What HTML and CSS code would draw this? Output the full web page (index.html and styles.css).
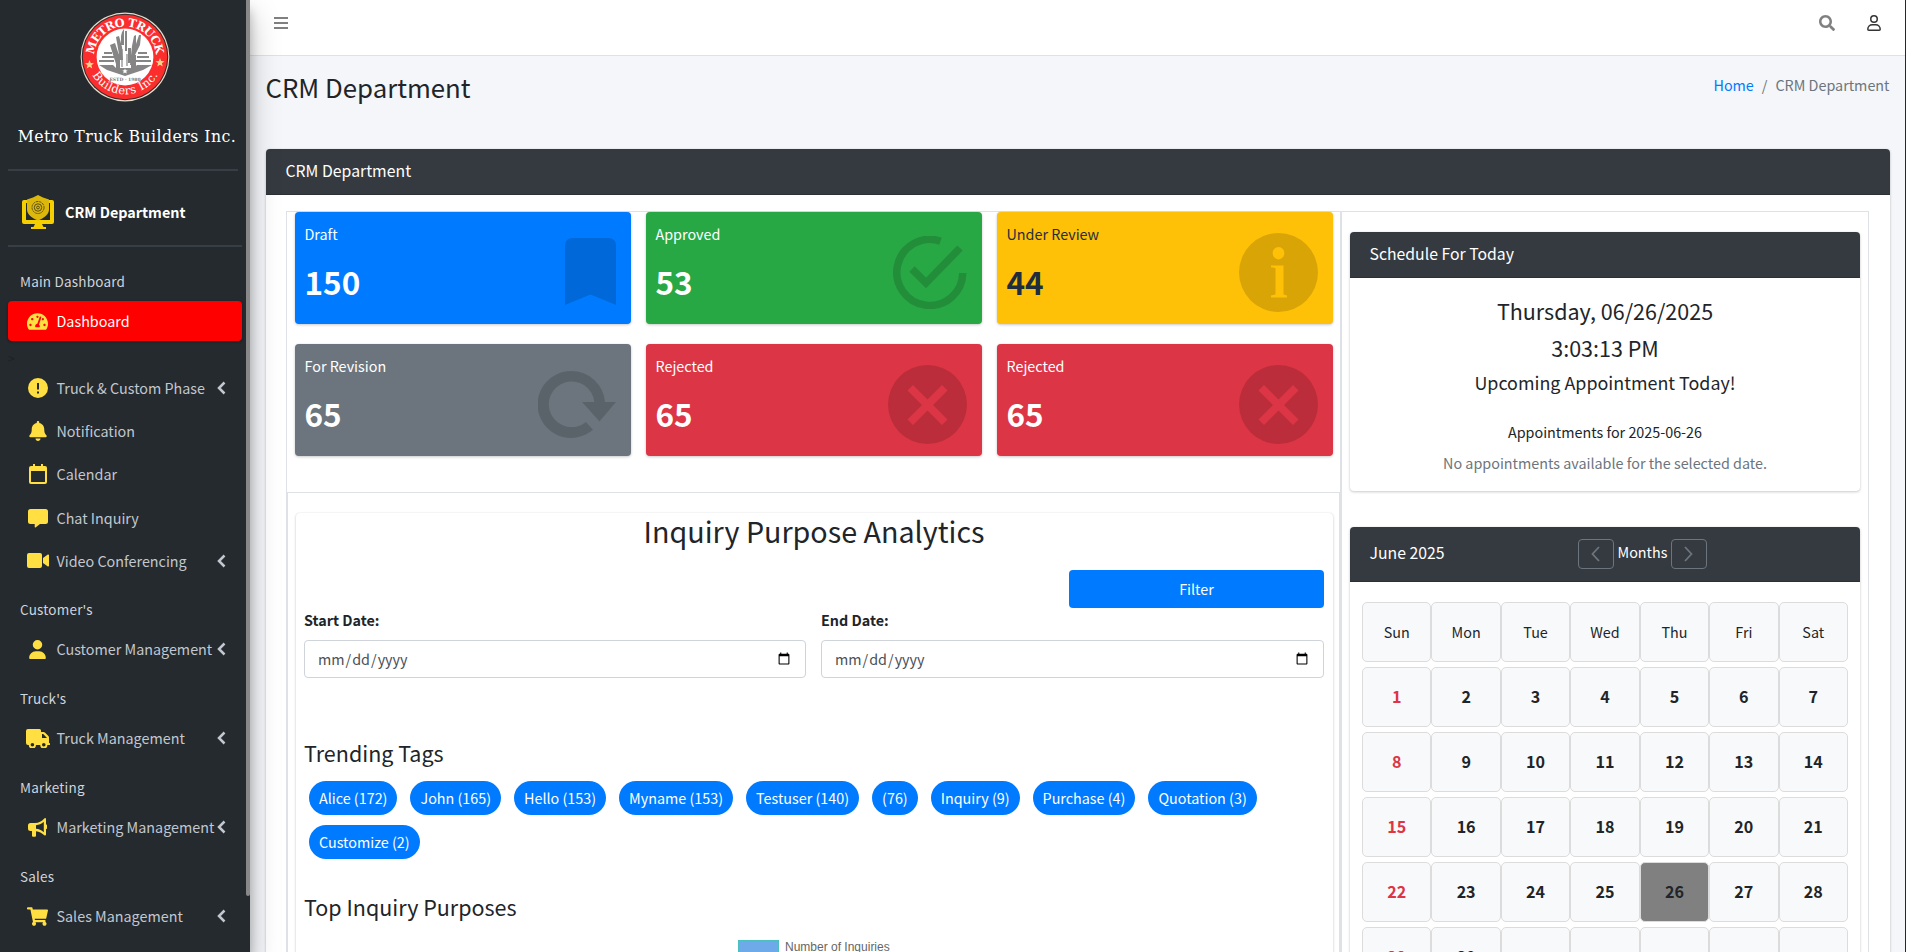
FILE: index.html
```html
<!DOCTYPE html>
<html lang="en">
<head>
<meta charset="utf-8">
<title>CRM Department</title>
<link rel="stylesheet" href="styles.css">
</head>
<body>
<div class="wrapper">
  <aside class="sidebar">
    <div class="brand">
      <svg class="brand-logo" viewBox="0 0 90 90" width="90" height="90">
        <defs>
          <path id="arc-top" d="M14.2 49a31 31 0 1 1 61.600 0"/>
          <path id="arc-bottom" d="M7.600 45a37.400 37.400 0 0 0 74.800 0"/>
        </defs>
        <circle cx="45" cy="45" r="44.400" fill="#e9dccb"/>
        <circle cx="45" cy="45" r="43.300" fill="#3a2a2a"/>
        <circle cx="45" cy="45" r="42.200" fill="#fb2d2d"/>
        <circle cx="45" cy="45" r="28.400" fill="#fff"/>
        <text class="logo-top"><textPath href="#arc-top" startOffset="50%" text-anchor="middle" textLength="92">METRO TRUCK</textPath></text>
        <text class="logo-bottom"><textPath href="#arc-bottom" startOffset="50%" text-anchor="middle" textLength="80">Builders Inc.</textPath></text>
        <path fill="#ffd08a" d="M9.500 48l1.200 3.100 3.300.2-2.600 2 .9 3.200-2.800-1.800-2.800 1.800.9-3.200-2.600-2 3.300-.2zM80 46l1.200 3.100 3.300.2-2.600 2 .9 3.200-2.800-1.800-2.800 1.800.9-3.200-2.600-2 3.300-.2z"/>
        <g fill="#858585">
          <path d="M42 20l2-3v16h-3V24zM45 19h2v20h-2zM30 33l5-2 4 12v9h-3zM36 25l3-1 3 11 1 13h-3zM52 34l2-10 2-1v9l3-9h2l-1 10-5 10-1 10h-4zM48 36h3v15h-3zM24 40h8v2h-8zM22 44h12v2H22zM19 48h15v2H19zM58 40h9v2h-9zM57 44h12v2H57zM56 48h15v2H56zM36 42h4v14h-4zM51 43h5v13h-5z"/>
          <path d="M19 53h14l3 3h18l3-3h15l-9 5-18 6-18-6z"/>
          <path d="M41 37h2v18h-2zM46 42h2v12h-2z" opacity=".6"/>
        </g>
        <path fill="#fff" d="M45 56.500l.8 1.700 1.900.2-1.400 1.200.4 1.900-1.700-1-1.700 1 .4-1.900-1.400-1.200 1.900-.2z"/>
        <text class="logo-small" x="45" y="68.500" text-anchor="middle">ESTD · 1980</text>
      </svg>
      <span class="brand-text">Metro Truck Builders Inc.</span>
    </div>
    <div class="user-panel">
      <svg width="34" height="34" viewBox="0 0 34 34">
        <path fill="#f5cf00" d="M3 5h8v3H5v17h24V8h-5V5h7a2 2 0 0 1 2 2v20a2 2 0 0 1-2 2H21l1.500 3H25v2H10v-2h2.500l1.500-3H3a2 2 0 0 1-2-2V7a2 2 0 0 1 2-2z"/>
        <path fill="#dcb80c" d="M17 0l5 2.500 6 2v10c0 5-5 8.500-11 11-6-2.500-11-6-11-11v-10l6-2z"/>
        <g fill="none" stroke="#5a4d10" stroke-width="1"><circle cx="17" cy="12.500" r="6" stroke-dasharray="2.400 .8"/><circle cx="17" cy="12.500" r="3.700"/><circle cx="17" cy="12.500" r="1.400"/></g>
      </svg>
      <span class="user-name">CRM Department</span>
    </div>
    <nav class="menu">
      <div class="menu-header first">Main Dashboard</div>
      <a class="menu-item active"><span class="ico"><svg width="21" height="19" viewBox="0 0 576 512"><path d="M288 32C128.940 32 0 160.940 0 320c0 52.800 14.250 102.260 39.060 144.800 5.610 9.620 16.300 15.200 27.440 15.200h443c11.140 0 21.830-5.580 27.440-15.200C561.750 422.260 576 372.800 576 320c0-159.060-128.940-288-288-288zm0 64c14.710 0 26.580 10.130 30.320 23.650-1.110 2.260-2.640 4.230-3.450 6.670l-9.220 27.670c-5.130 3.490-10.970 6.010-17.640 6.010-17.670 0-32-14.330-32-32S270.330 96 288 96zM96 384c-17.670 0-32-14.330-32-32s14.330-32 32-32 32 14.330 32 32-14.330 32-32 32zm48-160c-17.670 0-32-14.330-32-32s14.330-32 32-32 32 14.330 32 32-14.330 32-32 32zm246.770-72.410l-61.330 184C343.130 347.330 352 364.540 352 384c0 11.720-3.380 22.550-8.880 32H232.880c-5.500-9.450-8.880-20.280-8.880-32 0-33.940 26.500-61.430 59.900-63.590l61.340-184.010c4.170-12.560 17.730-19.450 30.360-15.170 12.570 4.190 19.350 17.790 15.170 30.360zm14.660 57.200l15.520-46.550c3.470-1.290 7.130-2.230 11.050-2.230 17.670 0 32 14.330 32 32s-14.330 32-32 32c-11.380-.01-20.890-6.280-26.570-15.220zM480 384c-17.670 0-32-14.330-32-32s14.330-32 32-32 32 14.330 32 32-14.330 32-32 32z"/></svg></span><span>Dashboard</span></a>
      <div class="stray">&gt;</div>
      <a class="menu-item tall"><span class="ico"><svg width="20" height="20" viewBox="0 0 20 20"><path fill-rule="evenodd" d="M10 0a10 10 0 1 0 0 20 10 10 0 0 0 0-20zM9 5h2v6.500H9zM9 13.500h2v2H9z"/></svg></span><span>Truck &amp; Custom Phase</span><svg class="chev" width="9" height="14" viewBox="0 0 9 14"><path d="M7.500 1.500L2 7l5.500 5.500"/></svg></a>
      <a class="menu-item tall"><span class="ico"><svg width="18" height="20" viewBox="0 0 448 512"><path d="M224 512c35.320 0 63.970-28.650 63.970-64H160.030c0 35.350 28.650 64 63.970 64zm215.390-149.710c-19.320-20.760-55.470-51.990-55.470-154.290 0-77.700-54.480-139.900-127.940-155.160V32c0-17.670-14.320-32-31.980-32s-31.980 14.330-31.980 32v20.840C118.560 68.100 64.080 130.300 64.080 208c0 102.300-36.150 133.530-55.470 154.290-6 6.450-8.660 14.160-8.610 21.710.11 16.400 12.980 32 32.100 32h383.800c19.120 0 32-15.600 32.100-32 .05-7.550-2.610-15.270-8.610-21.710z"/></svg></span><span>Notification</span></a>
      <a class="menu-item tall"><span class="ico"><svg width="18" height="20" viewBox="0 0 18 20"><path fill-rule="evenodd" d="M4 0h2v2h6V0h2v2h2a2 2 0 0 1 2 2v14a2 2 0 0 1-2 2H2a2 2 0 0 1-2-2V4a2 2 0 0 1 2-2h2zM2 7v11h14V7z"/></svg></span><span>Calendar</span></a>
      <a class="menu-item tall"><span class="ico"><svg width="20" height="20" viewBox="0 0 20 20"><path d="M2.500 1h15A2.500 2.500 0 0 1 20 3.500v10a2.500 2.500 0 0 1-2.500 2.500H12l-4.500 3.500c-.5.300-.8 0-.8-.4V16H2.500A2.500 2.500 0 0 1 0 13.500v-10A2.500 2.500 0 0 1 2.500 1z"/></svg></span><span>Chat Inquiry</span></a>
      <a class="menu-item tall"><span class="ico"><svg width="22" height="15" viewBox="0 0 22 15"><path d="M2 0h11a2 2 0 0 1 2 2v11a2 2 0 0 1-2 2H2a2 2 0 0 1-2-2V2a2 2 0 0 1 2-2zM16 5l4.500-3.200c.7-.5 1.500 0 1.500.8v9.800c0 .8-.8 1.300-1.500.8L16 10z"/></svg></span><span>Video Conferencing</span><svg class="chev" width="9" height="14" viewBox="0 0 9 14"><path d="M7.500 1.500L2 7l5.500 5.500"/></svg></a>
      <div class="menu-header customer">Customer's</div>
      <a class="menu-item"><span class="ico"><svg width="17" height="19" viewBox="0 0 448 512"><path d="M224 256A128 128 0 1 0 224 0a128 128 0 1 0 0 256zm-45.700 48C79.800 304 0 383.800 0 482.300C0 498.700 13.300 512 29.700 512H418.300c16.400 0 29.700-13.300 29.700-29.700C448 383.800 368.200 304 269.700 304H178.300z"/></svg></span><span>Customer Management</span><svg class="chev" width="9" height="14" viewBox="0 0 9 14"><path d="M7.500 1.500L2 7l5.500 5.500"/></svg></a>
      <div class="menu-header">Truck's</div>
      <a class="menu-item"><span class="ico"><svg width="24" height="19" viewBox="0 0 24 19"><path fill-rule="evenodd" d="M2 0h11.500A1.500 1.500 0 0 1 15 1.500V3h2.500c.5 0 1 .2 1.400.6L22.400 7c.4.4.6.9.6 1.400V14h.4a.6.600 0 0 1 .6.600v.8a.6.600 0 0 1-.6.600h-2a3.600 3.600 0 0 1-7.200 0H10a3.600 3.600 0 0 1-7.200 0H2a2 2 0 0 1-2-2V2a2 2 0 0 1 2-2zM16 5v4h5l-3.800-4zM6.400 14a1.800 1.800 0 1 0 0 3.600 1.800 1.800 0 0 0 0-3.600zM17.800 14a1.800 1.800 0 1 0 0 3.600 1.800 1.800 0 0 0 0-3.600z"/></svg></span><span>Truck Management</span><svg class="chev" width="9" height="14" viewBox="0 0 9 14"><path d="M7.500 1.500L2 7l5.500 5.500"/></svg></a>
      <div class="menu-header">Marketing</div>
      <a class="menu-item"><span class="ico"><svg width="19" height="19" viewBox="0 0 19 19"><path fill-rule="evenodd" d="M17.200.1a1 1 0 0 1 .8 1V6.500a2 2 0 0 1 0 4.500v5.500a1 1 0 0 1-1.700.7C13.500 14.800 11.500 13.500 8 13.200v4.600a1 1 0 0 1-1 1H5a1 1 0 0 1-1-1V13H2.500A2.500 2.500 0 0 1 0 10.500v-3A2.500 2.500 0 0 1 2.500 5H7c4 0 6.500-1.800 9.300-4.600a1 1 0 0 1 .9-.3zM15.800 3.800C13.300 6 11 7 8 7.200v3.600c3 .2 5.300 1.200 7.800 3.400z"/></svg></span><span>Marketing Management</span><svg class="chev" width="9" height="14" viewBox="0 0 9 14"><path d="M7.500 1.500L2 7l5.500 5.500"/></svg></a>
      <div class="menu-header">Sales</div>
      <a class="menu-item"><span class="ico"><svg width="21" height="19" viewBox="0 0 576 512"><path d="M528.120 301.319l47.273-208C578.806 78.301 567.391 64 551.990 64H159.208l-9.166-44.810C147.758 8.021 137.930 0 126.529 0H24C10.745 0 0 10.745 0 24v16c0 13.255 10.745 24 24 24h69.883l70.248 343.435C147.325 417.100 136 435.222 136 456c0 30.928 25.072 56 56 56s56-25.072 56-56c0-15.674-6.447-29.835-16.824-40h209.647C430.447 426.165 424 440.326 424 456c0 30.928 25.072 56 56 56s56-25.072 56-56c0-22.172-12.888-41.332-31.579-50.405l5.517-24.276c3.413-15.018-8.002-29.319-23.403-29.319H218.117l-6.545-32h293.145c11.206 0 20.920-7.754 23.403-18.681z"/></svg></span><span>Sales Management</span><svg class="chev" width="9" height="14" viewBox="0 0 9 14"><path d="M7.500 1.500L2 7l5.500 5.500"/></svg></a>
    </nav>
    <div class="scroll-thumb"></div>
  </aside>

  <div class="page">
    <header class="topbar">
      <svg width="14" height="14" viewBox="0 0 14 14" fill="#808080"><path d="M0 1h14v2H0zM0 6h14v2H0zM0 11h14v2H0z"/></svg>
      <div class="topbar-right">
        <svg width="16" height="16" viewBox="0 0 512 512" fill="#808080"><path d="M505 442.700L405.300 343c-4.500-4.500-10.600-7-17-7H372c27.600-35.300 44-79.700 44-128C416 93.100 322.900 0 208 0S0 93.100 0 208s93.100 208 208 208c48.300 0 92.700-16.400 128-44v16.300c0 6.400 2.500 12.500 7 17l99.700 99.700c9.400 9.400 24.600 9.400 33.900 0l28.300-28.300c9.400-9.400 9.400-24.600.1-34zM208 336c-70.700 0-128-57.200-128-128 0-70.700 57.200-128 128-128 70.700 0 128 57.200 128 128 0 70.700-57.200 128-128 128z"/></svg>
        <svg width="14" height="16" viewBox="0 0 14 16" fill="none" stroke="#343434" stroke-width="1.500"><circle cx="7" cy="4" r="3.250"/><path d="M.8 14.200a4.500 4.500 0 0 1 4.500-4.400h3.400a4.500 4.500 0 0 1 4.500 4.400c0 .6-.4 1-1 1H1.800c-.6 0-1-.4-1-1z"/></svg>
      </div>
    </header>

    <div class="content-header">
      <h1>CRM Department</h1>
      <div class="breadcrumb"><a>Home</a><span class="sep">/</span><span>CRM Department</span></div>
    </div>

    <section class="card main-card">
      <div class="card-header">CRM Department</div>
      <div class="columns">
        <div class="left-col">
          <div class="stats">
            <div class="stat blue"><div><p>Draft</p><h3>150</h3></div>
              <svg class="raised" width="51" height="67" viewBox="0 0 51 67"><path d="M7 0h37a7 7 0 0 1 7 7v60L25.500 56.500 0 67V7a7 7 0 0 1 7-7z"/></svg></div>
            <div class="stat green"><div><p>Approved</p><h3>53</h3></div>
              <svg width="74" height="73" viewBox="0 0 74 73"><path class="stroke" stroke-width="7.500" d="M47.500 5.200A33 33 0 1 0 69.800 37M19 33l14 14L67 12"/></svg></div>
            <div class="stat yellow"><div><p>Under Review</p><h3>44</h3></div>
              <svg width="79" height="79" viewBox="0 0 79 79"><path fill-rule="evenodd" d="M39.500 0a39.500 39.500 0 1 0 0 79 39.500 39.500 0 0 0 0-79zm0 14a5.800 6.200 0 1 1 0 12.400 5.800 6.200 0 0 1 0-12.400zM32 32.500H44.500V61.500l3.500 1V64.500H32V62.500l4.500-1V35l-4.500-.8z"/></svg></div>
            <div class="stat gray"><div><p>For Revision</p><h3>65</h3></div>
              <svg width="78" height="67" viewBox="0 0 78 67"><path d="M33.500 0A33.500 33.500 0 0 1 67 31H78L61.500 50.500 44 31H56.300A22.800 22.800 0 1 0 48 51L55 58.800A33.500 33.500 0 1 1 33.500 0z"/></svg></div>
            <div class="stat red"><div><p>Rejected</p><h3>65</h3></div>
              <svg width="79" height="79" viewBox="0 0 79 79"><path fill-rule="evenodd" d="M39.500 0a39.500 39.500 0 1 0 0 79 39.500 39.500 0 0 0 0-79zM25 20l14.500 14.500L54 20l5.500 5.500L45 40l14.500 14.500L54 60 39.500 45.500 25 60l-5.500-5.500L34 40 19.500 25.500z"/></svg></div>
            <div class="stat red"><div><p>Rejected</p><h3>65</h3></div>
              <svg width="79" height="79" viewBox="0 0 79 79"><path fill-rule="evenodd" d="M39.500 0a39.500 39.500 0 1 0 0 79 39.500 39.500 0 0 0 0-79zM25 20l14.500 14.500L54 20l5.500 5.500L45 40l14.500 14.500L54 60 39.500 45.500 25 60l-5.500-5.500L34 40 19.500 25.500z"/></svg></div>
          </div>
          <div class="analytics-box">
            <div class="card analytics">
              <h2>Inquiry Purpose Analytics</h2>
              <button class="filter">Filter</button>
              <div class="dates">
                <label>Start Date:<input type="date"></label>
                <label>End Date:<input type="date"></label>
              </div>
              <h4 class="trending">Trending Tags</h4>
              <div class="tags">
                <span>Alice (172)</span><span>John (165)</span><span>Hello (153)</span><span>Myname (153)</span><span>Testuser (140)</span><span>(76)</span><span>Inquiry (9)</span><span>Purchase (4)</span><span>Quotation (3)</span><span>Customize (2)</span>
              </div>
              <h4 class="top">Top Inquiry Purposes</h4>
              <div class="legend"><i></i>Number of Inquiries</div>
            </div>
          </div>
        </div>
        <div class="right-col">
          <div class="card schedule">
            <div class="card-header">Schedule For Today</div>
            <div class="schedule-body">
              <div class="big">Thursday, 06/26/2025</div>
              <div class="big time">3:03:13 PM</div>
              <div class="upcoming">Upcoming Appointment Today!</div>
              <div class="appts">Appointments for 2025-06-26</div>
              <div class="none">No appointments available for the selected date.</div>
            </div>
          </div>
          <div class="card calendar">
            <div class="card-header cal-header">
              <span class="cal-title">June 2025</span>
              <div class="months">
                <button><svg width="9" height="16" viewBox="0 0 9 16"><path d="M8 1L1.500 8 8 15"/></svg></button>
                <span>Months</span>
                <button><svg width="9" height="16" viewBox="0 0 9 16"><path d="M1 1l6.500 7L1 15"/></svg></button>
              </div>
            </div>
            <div class="cal-grid">
              <b class="dow">Sun</b><b class="dow">Mon</b><b class="dow">Tue</b><b class="dow">Wed</b><b class="dow">Thu</b><b class="dow">Fri</b><b class="dow">Sat</b>
              <b class="sun">1</b><b>2</b><b>3</b><b>4</b><b>5</b><b>6</b><b>7</b>
              <b class="sun">8</b><b>9</b><b>10</b><b>11</b><b>12</b><b>13</b><b>14</b>
              <b class="sun">15</b><b>16</b><b>17</b><b>18</b><b>19</b><b>20</b><b>21</b>
              <b class="sun">22</b><b>23</b><b>24</b><b>25</b><b class="today">26</b><b>27</b><b>28</b>
              <b class="sun">29</b><b>30</b><b></b><b></b><b></b><b></b><b></b>
            </div>
          </div>
        </div>
      </div>
    </section>
  </div>
</div>
</body>
</html>
```

FILE: styles.css
```css
* { box-sizing: border-box; }
html, body { height: 100%; }
body {
  margin: 0;
  overflow: hidden;
  background: #25292d;
  color: #212529;
  font-family: "Noto Sans CJK SC", "Noto Sans", sans-serif;
  font-size: 14.35px;
  line-height: 24px;
}
h1, h2, h3, h4, p { margin: 0; font-weight: 400; }
svg { display: block; flex: none; }
button { font: inherit; cursor: pointer; }

.wrapper { display: flex; width: 1905px; height: 952px; overflow: hidden; }

/* Sidebar */
.sidebar {
  position: relative;
  z-index: 2;
  flex: none;
  width: 250px;
  height: 952px;
  padding-left: 8px;
  background: #252a2e;
  box-shadow: 0 14px 28px rgba(0, 0, 0, .25), 0 10px 10px rgba(0, 0, 0, .22);
}
.scroll-thumb {
  position: absolute;
  top: 0;
  right: 0;
  width: 4px;
  height: 896px;
  background: #888;
  border-radius: 0 0 2px 2px;
}
.brand {
  display: flex;
  flex-direction: column;
  align-items: center;
  width: 230px;
  height: 171px;
  padding-top: 12px;
  border-bottom: 2px solid #383e46;
}
.brand-logo { margin-left: 4px; }
.logo-top { font: 700 11.500px "DejaVu Serif", serif; fill: #fff; }
.logo-bottom { font: 400 11.500px "DejaVu Serif", serif; fill: #fff; }
.logo-small { font: 700 4.500px "DejaVu Serif", serif; fill: #777; }
.brand-text {
  margin-top: 22px;
  margin-left: 8px;
  color: #fff;
  font-family: "DejaVu Serif Condensed", "DejaVu Serif", serif;
  font-size: 17.500px;
  letter-spacing: .45px;
  white-space: nowrap;
}
.user-panel {
  display: flex;
  align-items: center;
  gap: 10px;
  width: 234px;
  height: 76px;
  padding-left: 13px;
  padding-top: 8px;
  border-bottom: 2px solid #383e46;
}
.user-name { color: #fff; font-weight: 700; }
.menu-header {
  height: 39px;
  padding-left: 12px;
  color: #d0d4db;
  font-size: 13.500px;
  letter-spacing: .2px;
  line-height: 39px;
}
.menu-header.first { height: 54px; line-height: 69px; }
.menu-item {
  display: flex;
  align-items: center;
  width: 234px;
  height: 40px;
  margin-bottom: 9.900px;
  padding-right: 16px;
  padding-left: 16.500px;
  border-radius: 4px;
  color: #c2c7d0;
  white-space: nowrap;
}
.menu-item.active {
  margin-bottom: 0;
  background: #f00;
  color: #fff;
  box-shadow: 0 1px 3px rgba(0, 0, 0, .12), 0 1px 2px rgba(0, 0, 0, .24);
}
.menu-item.tall { height: 43.250px; margin: 0; }
.ico { display: flex; justify-content: center; flex: none; width: 26px; margin-right: 6px; fill: #ffdf42; }
.chev { margin-left: auto; fill: none; stroke: #c2c7d0; stroke-width: 2.500; }
.stray { height: 25.200px; color: #1d2124; font-size: 12px; line-height: 33px; }
.menu-header.customer { margin-top: 8px; }

/* Top bar and title */
.page { width: 1655px; height: 952px; overflow: hidden; background: #f4f6f9; }
.topbar {
  display: flex;
  justify-content: space-between;
  align-items: flex-start;
  height: 56px;
  padding: 16px 24px 0;
  border-bottom: 1px solid #dee2e6;
  background: #fff;
}
.topbar-right { display: flex; gap: 32px; margin-top: -1px; }
.content-header {
  display: flex;
  justify-content: space-between;
  height: 93px;
  padding: 13px 15.500px 0 15.500px;
}
.content-header h1 { font-size: 25.800px; line-height: 36px; }
.breadcrumb { padding-top: 4px; color: #6c757d; }
.breadcrumb a { color: #007bff; }
.breadcrumb .sep { padding: 0 8px; }

/* Cards */
.card {
  border-radius: 4px;
  background: #fff;
  box-shadow: 0 0 1px rgba(0, 0, 0, .125), 0 1px 3px rgba(0, 0, 0, .2);
}
.card-header {
  height: 46px;
  padding: 0 19.500px;
  border-bottom: 1px solid #2b3035;
  border-radius: 4px 4px 0 0;
  background: #343a40;
  color: #fff;
  font-size: 15.800px;
  line-height: 44px;
}
.main-card { width: 1624px; height: 1000px; margin-left: 16px; }
.columns {
  display: flex;
  width: 1583px;
  height: 900px;
  margin: 16px 0 0 20px;
  border: 1px solid #dee2e6;
}
.left-col { width: 1054px; border-right: 1px solid #dee2e6; }
.right-col { flex: 1; padding: 20px 8px 0; border-left: 1px solid #dee2e6; }

/* Stat tiles */
.stats {
  display: grid;
  grid-template-columns: repeat(3, 336px);
  gap: 20px 15px;
  height: 280px;
  align-content: start;
  padding-left: 8px;
}
.stat {
  display: flex;
  justify-content: space-between;
  align-items: center;
  height: 112px;
  padding: 9px 15px 0 9.500px;
  border-radius: 4px;
  color: #fff;
  box-shadow: 0 0 1px rgba(0, 0, 0, .125), 0 1px 3px rgba(0, 0, 0, .2);
}
.stat > div { align-self: flex-start; }
.stat p { padding-top: 1px; }
.stat h3 { margin-top: 14px; font-size: 31.500px; font-weight: 700; line-height: 42px; }
.stat svg { fill: rgba(0, 0, 0, .15); }
.stat .raised { margin-bottom: 2px; }
.stat .stroke { fill: none; stroke: rgba(0, 0, 0, .15); }
.blue { background: #007bff; }
.green { background: #28a745; }
.yellow { background: #ffc107; color: #1f2d3d; }
.gray { background: #6c757d; }
.red { background: #dc3545; }

/* Analytics */
.analytics-box {
  height: 640px;
  padding: 20px 6px 0 7.500px;
  border: 1px solid #dee2e6;
}
.analytics { height: 600px; padding: 0 9px 0 8.500px; }
.analytics h2 { height: 57px; font-size: 28.700px; line-height: 36px; text-align: center; }
.filter {
  display: block;
  width: 255px;
  height: 38px;
  margin-left: auto;
  border: 0;
  border-radius: 4px;
  background: #007bff;
  color: #fff;
}
.dates { display: grid; grid-template-columns: 502px 503px; gap: 15px; }
.dates label { font-weight: 700; }
.dates input {
  display: block;
  width: 100%;
  height: 38px;
  margin-top: 8px;
  padding: 6px 12px;
  border: 1px solid #ced4da;
  border-radius: 4px;
  background: #fff;
  color: #495057;
  font: 400 14.350px/24px "Noto Sans CJK SC", sans-serif;
}
.analytics h4 { font-size: 21.500px; line-height: 29px; }
.trending { margin-top: 60px; }
.tags { display: flex; flex-wrap: wrap; gap: 10px 13px; margin-top: 14px; padding-left: 5px; }
.tags span { padding: 5px 10px; border-radius: 17px; background: #007bff; color: #fff; }
.top { margin-top: 33px; }
.legend {
  display: flex;
  align-items: center;
  gap: 6px;
  margin: 19px 0 0 434px;
  color: #666;
  font: 12px/12px "Liberation Sans", Arial, sans-serif;
}
.legend i { width: 41px; height: 13px; border: 1px solid #4bc0c0; background: #6eaaea; }

/* Schedule */
.schedule { height: 259px; }
.schedule-body { padding-top: 18px; text-align: center; }
.big { height: 37px; font-size: 21.500px; line-height: 30px; }
.upcoming { font-size: 17.900px; line-height: 24px; }
.appts { margin-top: 26px; }
.none { margin-top: 7px; color: #6c757d; }

/* Calendar */
.calendar { height: 500px; margin-top: 36px; }
.cal-header { display: flex; height: 55px; line-height: 52px; }
.cal-title { width: 208px; }
.months { display: flex; gap: 4px; font-size: 14.350px; padding-top: 12px; line-height: 26px; }
.months span { width: 49px; }
.months button {
  display: flex;
  align-items: center;
  justify-content: center;
  width: 36px;
  height: 30px;
  border: 1px solid #6c757d;
  border-radius: 4px;
  background: none;
}
.months path { fill: none; stroke: #6c757d; stroke-width: 1.800; }
.cal-grid {
  display: grid;
  grid-template-columns: repeat(7, 1fr);
  gap: 5px 0;
  padding: 20px 12px;
}
.cal-grid b {
  height: 60px;
  border: 1px solid #dcdcdc;
  border-radius: 5px;
  background: #f8f9fa;
  font-size: 16.100px;
  line-height: 56px;
  text-align: center;
}
.cal-grid .dow { font-size: 14.350px; font-weight: 400; line-height: 57px; }
.cal-grid .sun { color: #dc3545; }
.cal-grid .today { background: #808080; }
```
